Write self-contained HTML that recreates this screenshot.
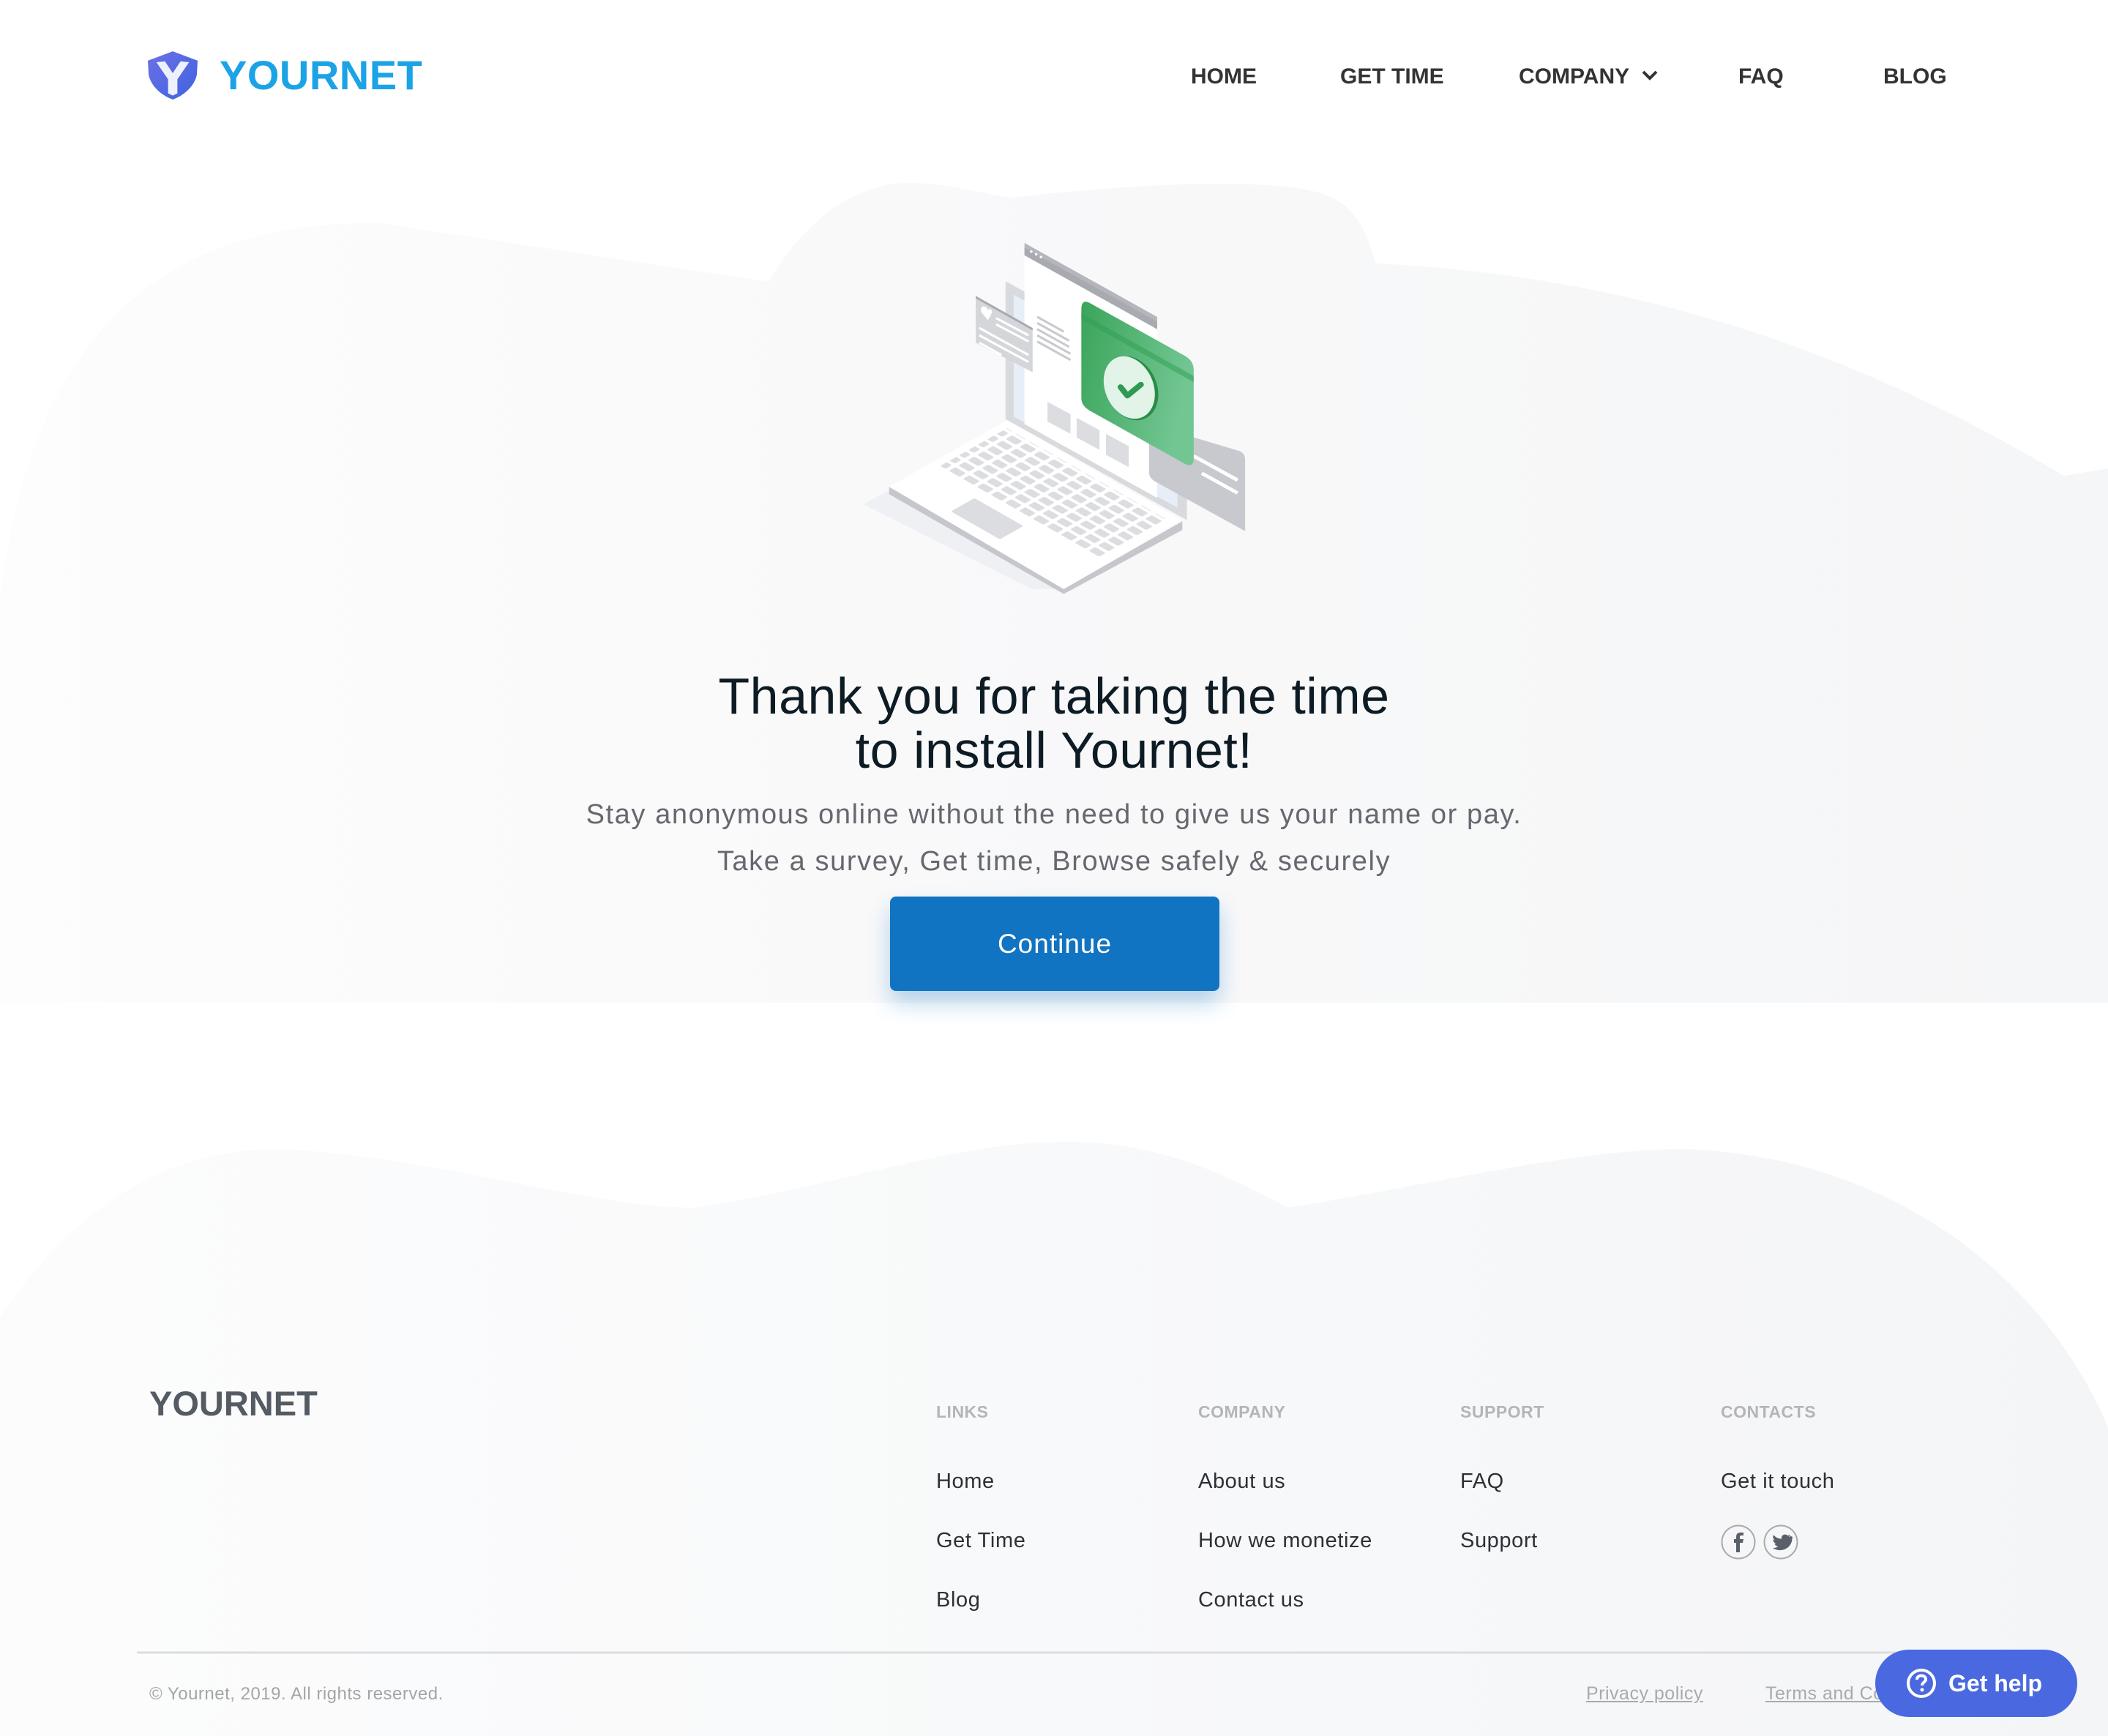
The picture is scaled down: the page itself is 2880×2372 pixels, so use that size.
<!DOCTYPE html>
<html><head><meta charset="utf-8"><style>
*{margin:0;padding:0;box-sizing:border-box}
body{width:2880px;height:2372px;position:relative;overflow:hidden;background:#fff;font-family:"Liberation Sans",sans-serif}
.a{position:absolute;white-space:nowrap}
.nav{top:84px;font-size:30px;font-weight:bold;color:#333;line-height:42px}
.h{left:0;width:2880px;text-align:center;font-size:70px;color:#0d1b24;line-height:74px;letter-spacing:0.5px}
.s{left:0;width:2880px;text-align:center;font-size:38px;color:#66686f;line-height:64px;letter-spacing:1.6px}
.fh{top:1914px;font-size:23px;font-weight:bold;color:#b3b5b8;line-height:30px;letter-spacing:0.5px}
.fi{font-size:29px;color:#2d3035;line-height:40px;letter-spacing:0.6px}
</style></head><body>
<svg class="a" style="left:0;top:0" width="2880" height="2372" viewBox="0 0 2880 2372">
<defs>
<linearGradient id="g1" x1="0" x2="1" y1="0" y2="0"><stop offset="0" stop-color="#fdfdfd"/><stop offset="0.4" stop-color="#f9f9fa"/><stop offset="1" stop-color="#f5f6f7"/></linearGradient>
<linearGradient id="g2" x1="0" x2="1" y1="0" y2="0"><stop offset="0" stop-color="#fcfcfd"/><stop offset="0.5" stop-color="#f8f9fa"/><stop offset="1" stop-color="#f4f5f7"/></linearGradient>
</defs>
<path d="M0,1370 L0,820 C40,480 200,300 520,305 L1050,385 C1100,300 1170,250 1240,250 C1300,250 1340,265 1380,270 C1560,250 1760,240 1820,270 C1860,290 1870,330 1880,360 C2300,380 2600,520 2820,650 L2880,640 L2880,1370 Z" fill="url(#g1)"/>
<path d="M0,1800 C80,1680 200,1570 380,1570 C600,1580 800,1650 950,1650 C1150,1620 1300,1560 1460,1560 C1600,1560 1700,1620 1760,1650 C1950,1620 2150,1570 2300,1570 C2600,1580 2800,1760 2880,1950 L2880,2372 L0,2372 Z" fill="url(#g2)"/>
<line x1="187" y1="2258" x2="2700" y2="2258" stroke="#dcdde0" stroke-width="3"/>
</svg>

<svg class="a" style="left:202px;top:70px" width="68" height="66" viewBox="0 0 64 62">
<defs><linearGradient id="sh" x1="0" y1="0" x2="1" y2="1"><stop offset="0" stop-color="#6b70e6"/><stop offset="1" stop-color="#3f63de"/></linearGradient></defs>
<path d="M32,0 L64,12 L63,30 C60,46 44,58 32,62 C20,58 4,46 1,30 L0,12 Z" fill="url(#sh)"/>
<path d="M11,14 L22,13 L32,28 L42,13 L53,14 L38,36 L38,54 L32,57 L26,54 L26,36 Z" fill="#eef0fb"/>
</svg>
<div class="a" style="left:300px;top:70px;font-size:56px;font-weight:bold;color:#1ba3e6;line-height:66px;letter-spacing:0.5px">YOURNET</div>

<div class="a nav" style="left:1627px">HOME</div>
<div class="a nav" style="left:1831px">GET TIME</div>
<div class="a nav" style="left:2075px">COMPANY</div>
<svg class="a" style="left:2242px;top:94px" width="24" height="18" viewBox="0 0 24 18"><path d="M3,4 L12,13 L21,4" fill="none" stroke="#333" stroke-width="4"/></svg>
<div class="a nav" style="left:2375px">FAQ</div>
<div class="a nav" style="left:2573px">BLOG</div>

<svg class="a" style="left:1150px;top:300px" width="580" height="520" viewBox="0 0 1568 1406">
<defs>
<linearGradient id="gr" x1="0" y1="0" x2="1" y2="0.3"><stop offset="0" stop-color="#3aa55a"/><stop offset="1" stop-color="#72c692"/></linearGradient>
<pattern id="kp" width="8" height="8" patternUnits="userSpaceOnUse"><rect x="1" y="1" width="6" height="5.5" rx="0.8" fill="#dcdde0"/></pattern>
</defs>
<g transform="scale(1,0.91)">
<polygon points="80,1155 175,1100 820,1500 700,1500" fill="#eceef2" opacity="0.8"/>
<polygon points="605,250 1275,660 1275,1220 605,810" fill="#d8dadd"/>
<polygon points="635,305 1240,675 1240,1170 635,800" fill="#e8eef8"/>
<polygon points="675,95 1165,395 1165,1130 675,830" fill="#fff"/>
<polygon points="675,95 1165,395 1165,445 675,145" fill="#b4b6bb"/>
<polygon points="675,115 1165,415 1165,445 675,145" fill="#a8aab0"/>
<circle cx="700" cy="130" r="5" fill="#fff"/><circle cx="718" cy="141" r="5" fill="#fff"/><circle cx="736" cy="152" r="5" fill="#fff"/>
<g stroke="#c8cacf" stroke-width="9">
<line x1="722" y1="395" x2="820" y2="455"/><line x1="722" y1="420" x2="840" y2="492"/><line x1="722" y1="445" x2="840" y2="517"/><line x1="722" y1="470" x2="845" y2="545"/><line x1="722" y1="495" x2="845" y2="570"/></g>
<polygon points="760,740 845,790 845,870 760,820" fill="#dcdde0"/>
<polygon points="868,805 952,855 952,935 868,885" fill="#dcdde0"/>
<polygon points="976,870 1060,920 1060,1005 976,955" fill="#dcdde0"/>
<polygon points="495,310 705,440 705,620 495,500" fill="#d4d6da"/>
<polygon points="495,310 705,440 705,450 495,320" fill="#a8aab0"/>
<path d="M530,355 C515,345 510,365 518,380 L540,408 L552,385 C560,368 548,355 540,368 C538,360 535,356 530,355Z" fill="#fff"/>
<g stroke="#fff" stroke-width="9"><line x1="570" y1="400" x2="690" y2="470"/><line x1="570" y1="425" x2="690" y2="495"/><line x1="508" y1="440" x2="690" y2="550"/><line x1="508" y1="470" x2="690" y2="578"/><line x1="508" y1="500" x2="590" y2="550"/></g>
<path d="M1135,830 L1470,940 Q1490,950 1490,975 L1490,1265 L1160,1065 Q1135,1050 1135,1025 Z" fill="#c7c9ce"/>
<g stroke="#fff" stroke-width="14"><line x1="1300" y1="960" x2="1462" y2="1058"/><line x1="1330" y1="1030" x2="1462" y2="1110"/></g>
<path d="M915,338 L1270,555 Q1300,575 1300,610 L1300,970 Q1300,1010 1265,990 L915,775 Q885,755 885,725 L885,365 Q885,322 915,338 Z" fill="url(#gr)"/>
<polygon points="885,380 1300,635 1300,660 885,405" fill="#2e9e52" opacity="0.5"/>
<ellipse cx="1070" cy="685" rx="95" ry="133" transform="rotate(-18 1070 685)" fill="#2a8c48"/>
<ellipse cx="1062" cy="682" rx="90" ry="130" transform="rotate(-18 1062 682)" fill="#e2f3e7"/>
<path d="M1030,680 L1055,715 L1105,670" fill="none" stroke="#2f9a52" stroke-width="22" stroke-linecap="round" stroke-linejoin="round"/>
<polygon points="175,1085 175,1115 820,1520 1258,1260 1258,1225 820,1500" fill="#c5c7cc"/>
<polygon points="610,815 1255,1220 820,1500 175,1085" fill="#fff"/>
<g transform="matrix(6.45,4.05,-4.35,2.70,610,815)">
<rect x="4" y="6" width="92" height="58" fill="url(#kp)"/>
<rect x="30" y="72" width="28" height="20" rx="1" fill="#dcdde0"/>
</g>
</g>
</svg>

<div class="a h" style="top:914px">Thank you for taking the time</div>
<div class="a h" style="top:988px">to install Yournet!</div>
<div class="a s" style="top:1081px">Stay anonymous online without the need to give us your name or pay.</div>
<div class="a s" style="top:1145px">Take a survey, Get time, Browse safely &amp; securely</div>
<div class="a" style="left:1216px;top:1225px;width:450px;height:129px;background:#1174c2;border-radius:8px;box-shadow:0 16px 30px rgba(17,116,194,0.3);color:#fff;font-size:37px;line-height:129px;text-align:center;letter-spacing:1px">Continue</div>

<div class="a" style="left:204px;top:1888px;font-size:47px;font-weight:bold;color:#555b63;line-height:60px">YOURNET</div>
<div class="a fh" style="left:1279px">LINKS</div>
<div class="a fh" style="left:1637px">COMPANY</div>
<div class="a fh" style="left:1995px">SUPPORT</div>
<div class="a fh" style="left:2351px">CONTACTS</div>
<div class="a fi" style="left:1279px;top:2004px">Home</div>
<div class="a fi" style="left:1279px;top:2085px">Get Time</div>
<div class="a fi" style="left:1279px;top:2166px">Blog</div>
<div class="a fi" style="left:1637px;top:2004px">About us</div>
<div class="a fi" style="left:1637px;top:2085px">How we monetize</div>
<div class="a fi" style="left:1637px;top:2166px">Contact us</div>
<div class="a fi" style="left:1995px;top:2004px">FAQ</div>
<div class="a fi" style="left:1995px;top:2085px">Support</div>
<div class="a fi" style="left:2351px;top:2004px">Get it touch</div>
<svg class="a" style="left:2351px;top:2083px" width="110" height="50" viewBox="0 0 110 50">
<circle cx="24" cy="24" r="22.5" fill="none" stroke="#aaa" stroke-width="2"/>
<path d="M26,38 L26,25 L30,25 L31,20 L26,20 L26,17 C26,15.5 27,15 28.5,15 L31,15 L31,11 L27,11 C23,11 21,13 21,17 L21,20 L18,20 L18,25 L21,25 L21,38 Z" fill="#5a6069"/>
<circle cx="82" cy="24" r="22.5" fill="none" stroke="#aaa" stroke-width="2"/>
<path d="M96,16 C94.8,16.5 93.7,16.8 92.5,17 C93.8,16.2 94.7,15 95.2,13.7 C94,14.4 92.7,14.9 91.3,15.2 C88.6,12.3 83.8,13.6 83,17.4 C82.8,18.2 82.9,19 83.1,19.7 C78.5,19.5 74.7,17.5 72,14.3 C70.6,16.8 71.5,19.8 73.7,21.3 C72.9,21.3 72.1,21 71.4,20.6 C71.4,23.3 73.3,25.4 75.8,26 C75,26.2 74.2,26.3 73.4,26.1 C74.1,28.3 76.1,29.8 78.4,29.9 C76.2,31.6 73.5,32.4 70.8,32.1 C83.6,39.9 97.5,31.5 97.5,18.9 L97.5,18.3 C98.2,17.6 98.8,16.9 96,16 Z" fill="#5a6069"/>
</svg>
<div class="a" style="left:204px;top:2300px;font-size:24px;color:#a3a5a9;line-height:30px;letter-spacing:0.5px">© Yournet, 2019. All rights reserved.</div>
<div class="a" style="left:2167px;top:2298px;font-size:25px;color:#a8aaae;line-height:32px;text-decoration:underline;letter-spacing:0.5px">Privacy policy</div>
<div class="a" style="left:2412px;top:2298px;font-size:25px;color:#a8aaae;line-height:32px;text-decoration:underline;letter-spacing:0.5px">Terms and Conditions</div>
<div class="a" style="left:2562px;top:2254px;width:276px;height:92px;border-radius:46px;background:#4a69e0;color:#fff;font-size:32px;font-weight:bold;line-height:92px;padding-left:100px">Get help</div>
<svg class="a" style="left:2604px;top:2279px" width="42" height="42" viewBox="0 0 42 42"><circle cx="21" cy="21" r="18" fill="none" stroke="#fff" stroke-width="4"/><path d="M15,16 C15,12 18,10.5 21,10.5 C24.5,10.5 27,12.5 27,15.5 C27,19.5 22,19.5 22,24" fill="none" stroke="#fff" stroke-width="4"/><circle cx="22" cy="30" r="2.5" fill="#fff"/></svg>
</body></html>
